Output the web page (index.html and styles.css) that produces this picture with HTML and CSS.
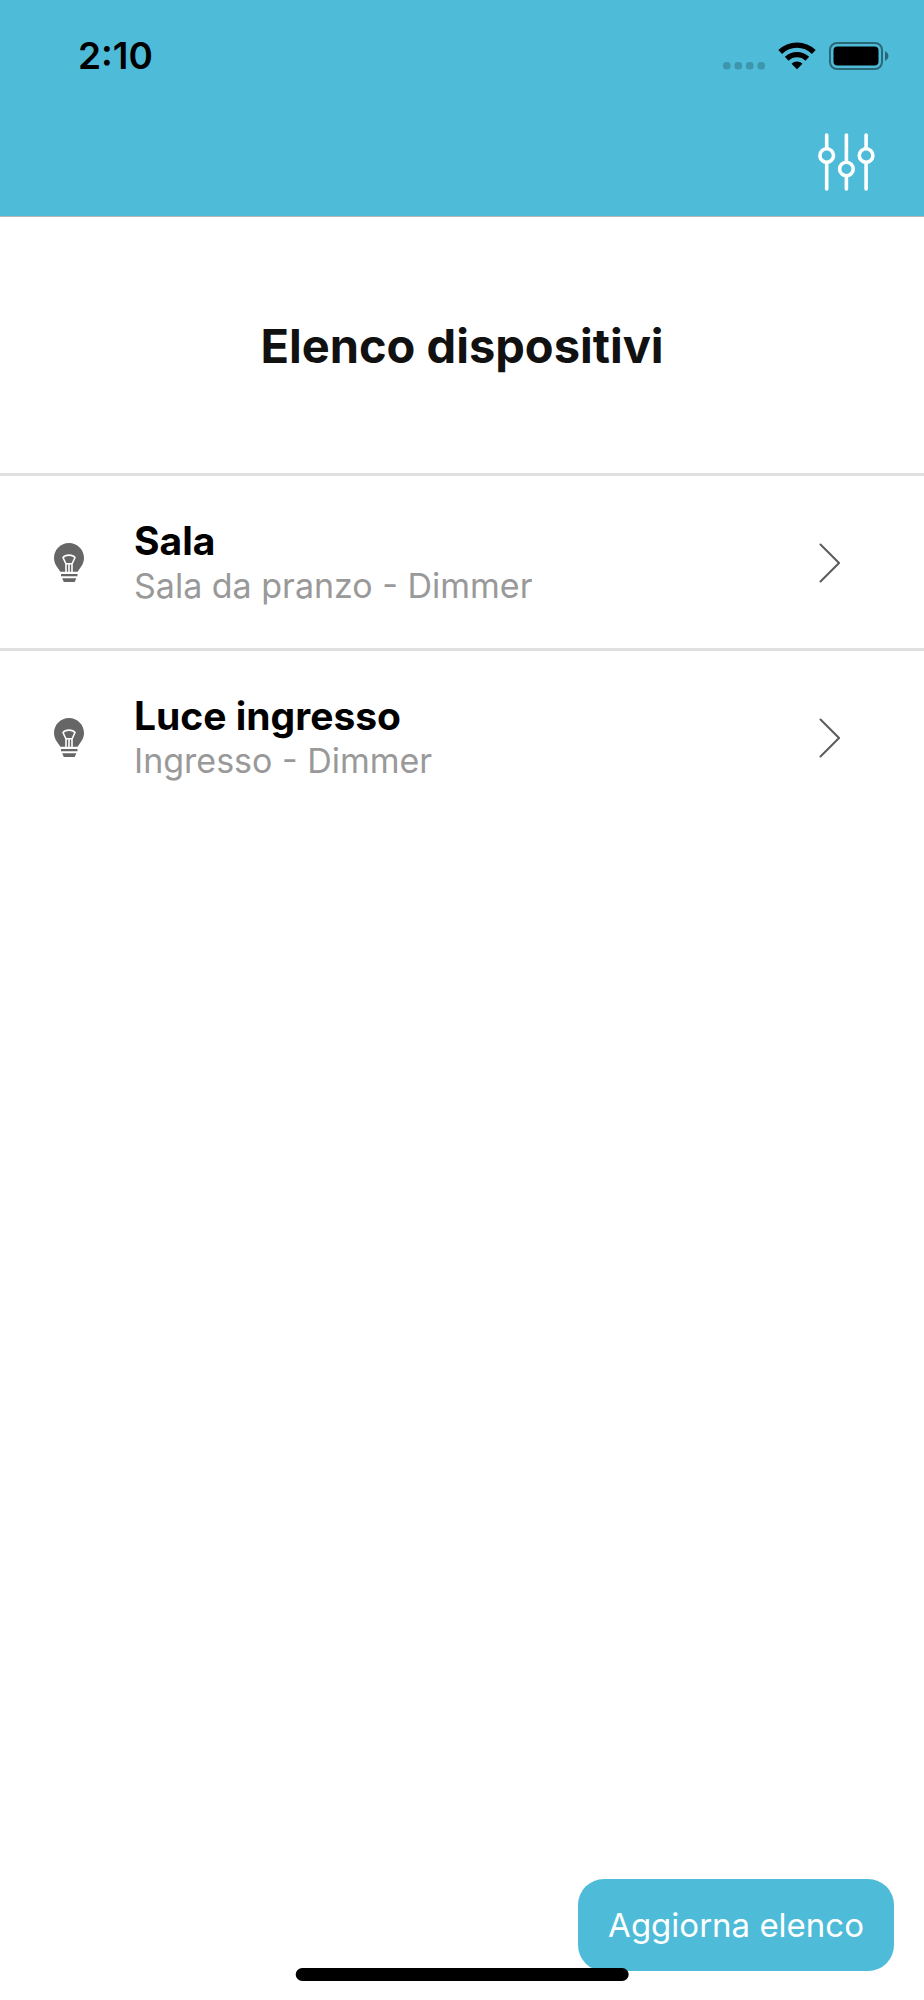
FILE: index.html
```html
<!DOCTYPE html>
<html lang="it">
<head>
<meta charset="utf-8">
<meta name="viewport" content="width=device-width, initial-scale=1">
<title>Elenco dispositivi</title>
<link rel="stylesheet" href="styles.css">
</head>
<body class="app">
<svg width="0" height="0" class="sprite" aria-hidden="true">
  <symbol id="bulb" viewBox="0 0 30 40">
    <path fill="#666" d="M15 0C6.700 0 0 6.700 0 15c0 5.300 2.900 8.600 4.900 11.600.7 1.100.9 1.700 1.500 2.200h17.200c.6-.5.8-1.100 1.500-2.200 2-3 4.900-6.300 4.900-11.600C30 6.700 23.300 0 15 0zM7 31h16.500v2.200H7zM8.200 35.200h14.100L20.700 39H9.800z"/>
    <path fill="none" stroke="#fff" stroke-width="1.600" stroke-linejoin="round" d="M12 29v-8L9 14.500c2.500-3.200 9.500-3.200 12 0L18 21v8M11.500 20.800h7M15 21V29"/>
  </symbol>
  <symbol id="chevron" viewBox="0 0 21 40">
    <path fill="none" stroke="#5c5c5c" stroke-width="2" stroke-linecap="round" d="M1.500 1.500 20 20 1.500 38.500"/>
  </symbol>
</svg>
<header class="header">
  <div class="status">
    <time class="clock">2:10</time>
    <div class="indicators">
      <svg width="42" height="28" viewBox="0 0 42 28" fill="#000" fill-opacity=".2" aria-hidden="true"><rect x="0" y="20" width="7.500" height="7.500" rx="3"/><rect x="11.500" y="20" width="7.500" height="7.500" rx="3"/><rect x="23" y="20" width="7.500" height="7.500" rx="3"/><rect x="34.500" y="20" width="7.500" height="7.500" rx="3"/></svg>
      <svg width="38" height="28" viewBox="0 0 38 28" aria-hidden="true"><g fill="none" stroke="#000" stroke-width="5.400"><path d="M2.200 10a24 24 0 0 1 33.600 0"/><path d="M8.700 16.700a15 15 0 0 1 20.600 0"/></g><path d="M19 27.300l-5.500-5.600a8 8 0 0 1 11 0z"/></svg>
      <svg width="60" height="28" viewBox="0 0 60 28" aria-hidden="true"><rect x="1" y="1" width="52" height="26" rx="7" fill="none" stroke="#000" stroke-opacity=".45" stroke-width="2"/><rect x="4.500" y="4.500" width="45" height="19" rx="4"/><path fill-opacity=".45" d="M56 9.200c4.600 1.800 4.600 7.800 0 9.600z"/></svg>
    </div>
  </div>
  <button class="settings" type="button" aria-label="Impostazioni">
    <svg width="58" height="58" viewBox="0 0 58 58" fill="none" stroke="#fff" stroke-width="3.600" stroke-linecap="round"><path d="M8.700 2v13M8.700 30v26M28.400 2v26.500M28.400 43.500V56M48.100 2v13M48.100 30v26"/><circle cx="8.700" cy="22.500" r="6.800"/><circle cx="28.400" cy="36" r="6.800"/><circle cx="48.100" cy="22.500" r="6.800"/></svg>
  </button>
</header>
<main class="main">
  <h1 class="title">Elenco dispositivi</h1>
  <ul class="devices">
    <li class="item"><a class="device" href="#sala">
      <svg class="bulb" aria-hidden="true"><use href="#bulb"/></svg>
      <span class="text"><span class="name">Sala</span><span class="detail">Sala da pranzo - Dimmer</span></span>
      <svg class="chevron" aria-hidden="true"><use href="#chevron"/></svg>
    </a></li>
    <li class="item"><a class="device" href="#ingresso">
      <svg class="bulb" aria-hidden="true"><use href="#bulb"/></svg>
      <span class="text"><span class="name">Luce ingresso</span><span class="detail">Ingresso - Dimmer</span></span>
      <svg class="chevron" aria-hidden="true"><use href="#chevron"/></svg>
    </a></li>
  </ul>
</main>
<footer class="footer">
  <button class="refresh" type="button">Aggiorna elenco</button>
</footer>
<div class="home-bar"></div>
</body>
</html>
```
FILE: styles.css
```css
* { box-sizing: border-box; }

.app {
  display: flex;
  flex-direction: column;
  min-height: 100vh;
  margin: 0;
  background: #fff;
  color: #000;
  font-family: Inter, "Liberation Sans", sans-serif;
}

.sprite { position: absolute; }

.header {
  display: flex;
  flex-direction: column;
  gap: 21px;
  padding-bottom: 25px;
  background: #4ebcd9;
  border-bottom: 1px solid #b4b8ba;
}

.status {
  display: flex;
  align-items: center;
  justify-content: space-between;
  height: 112px;
  padding: 0 35px 0 78px;
}

.clock { font-size: 37px; font-weight: 600; line-height: 44px; }

.indicators { display: flex; align-items: center; gap: 13px; }

.settings {
  display: flex;
  align-self: flex-end;
  margin-right: 48px;
  padding: 0;
  border: 0;
  background: none;
}

.main { flex: 1; }

.title {
  margin: 0;
  padding: 101px 24px 99px;
  color: #111;
  font-size: 47px;
  font-weight: 700;
  line-height: 56px;
  text-align: center;
}

.devices { margin: 0; padding: 0; list-style: none; }

.item { border-top: 3px solid #e0e0e0; }

.device {
  display: flex;
  align-items: center;
  padding: 42px 84px 40px 54px;
  color: inherit;
  text-decoration: none;
}

.bulb { width: 30px; height: 40px; }

.text { display: flex; flex: 1; flex-direction: column; margin-left: 50px; }

.name { font-size: 39px; font-weight: 700; line-height: 45px; }

.detail { color: #999; font-size: 34px; line-height: 45px; }

.chevron { width: 21px; height: 40px; }

.footer {
  display: flex;
  justify-content: flex-end;
  padding: 0 30px 29px;
}

.refresh {
  height: 92px;
  padding: 0 30px;
  border: 0;
  border-radius: 26px;
  background: #4ebcd9;
  color: #fff;
  font-family: inherit;
  font-size: 33px;
}

.home-bar {
  position: fixed;
  bottom: 19px;
  left: 50%;
  width: 36%;
  height: 13px;
  border-radius: 7px;
  background: #000;
  transform: translateX(-50%);
}
```
